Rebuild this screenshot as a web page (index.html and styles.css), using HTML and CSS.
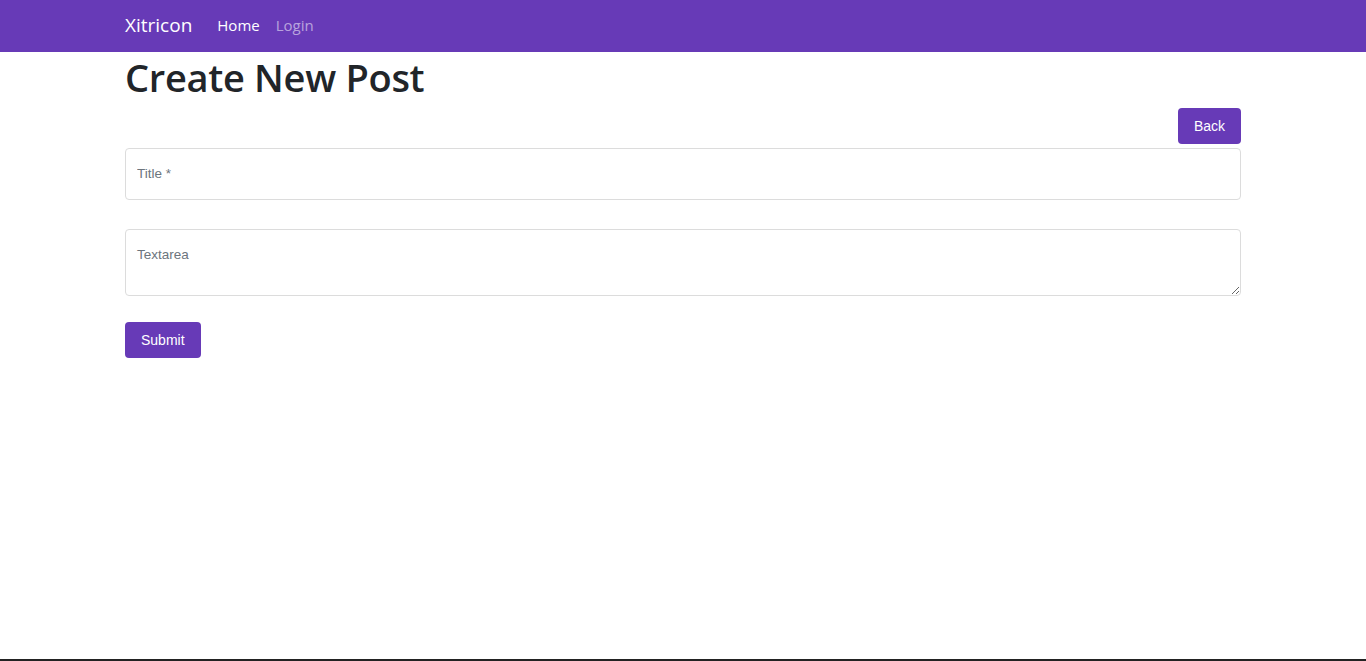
FILE: index.html
```html
<!DOCTYPE html>
<html lang="en">
<head>
<meta charset="utf-8">
<title>Create New Post</title>
<link rel="stylesheet" href="styles.css">
</head>
<body>
<div class="page">
  <nav class="navbar">
    <div class="container nav-inner">
      <a class="brand" href="#">Xitricon</a>
      <a class="nav-link active" href="#">Home</a>
      <a class="nav-link" href="#">Login</a>
    </div>
  </nav>
  <main class="container main">
    <h1 class="title">Create New Post</h1>
    <div class="actions">
      <button class="btn" type="button">Back</button>
    </div>
    <form class="form">
      <input class="field field-input" type="text" placeholder="Title *">
      <textarea class="field field-textarea" placeholder="Textarea"></textarea>
      <div><button class="btn" type="submit">Submit</button></div>
    </form>
  </main>
  <footer class="footer"></footer>
</div>
</body>
</html>
```
FILE: styles.css
```css
* { box-sizing: border-box; }
html, body { margin: 0; padding: 0; }
body {
  font-family: "Open Sans", "Noto Sans", sans-serif;
  color: #212529;
  background: #fff;
}
.page {
  min-height: 100vh;
  display: flex;
  flex-direction: column;
}
.container {
  width: 1140px;
  margin: 0 auto;
  padding: 0 12px;
}
.navbar {
  background: #673ab7;
  height: 52px;
}
.nav-inner {
  display: flex;
  align-items: center;
  height: 52px;
}
.brand {
  color: #fff;
  font-size: 19px;
  text-decoration: none;
  margin-right: 25px;
  padding-bottom: 2px;
}
.nav-link {
  color: rgba(255,255,255,0.55);
  font-size: 15px;
  text-decoration: none;
  margin-right: 16px;
  padding-bottom: 2px;
}
.nav-link.active { color: #fff; }
.main { flex: 1; }
.title {
  font-size: 38px;
  font-weight: 600;
  margin: 1px 0 0;
  line-height: 48px;
  letter-spacing: -0.3px;
}
.actions {
  display: flex;
  justify-content: flex-end;
  margin-top: 7px;
}
.btn {
  background: #673ab7;
  color: #fff;
  border: none;
  border-radius: 4px;
  height: 36px;
  padding: 0 16px;
  font-family: "Liberation Sans", Arial, sans-serif;
  font-size: 14px;
  cursor: pointer;
}
.form {
  display: flex;
  flex-direction: column;
  margin-top: 4px;
}
.field {
  width: 100%;
  border: 1px solid #dcdcdc;
  border-radius: 4px;
  font-family: "Liberation Sans", Arial, sans-serif;
  font-size: 13.5px;
  color: #212529;
  padding: 0 11px 2px;
  outline: none;
}
.field::placeholder { color: #6c757d; }
.field-input {
  height: 52px;
}
.field-textarea {
  margin-top: 29px;
  height: 67px;
  padding-top: 17px;
  resize: vertical;
}
.form > div { margin-top: 26px; }
.footer {
  height: 2px;
  background: #222;
}
```
